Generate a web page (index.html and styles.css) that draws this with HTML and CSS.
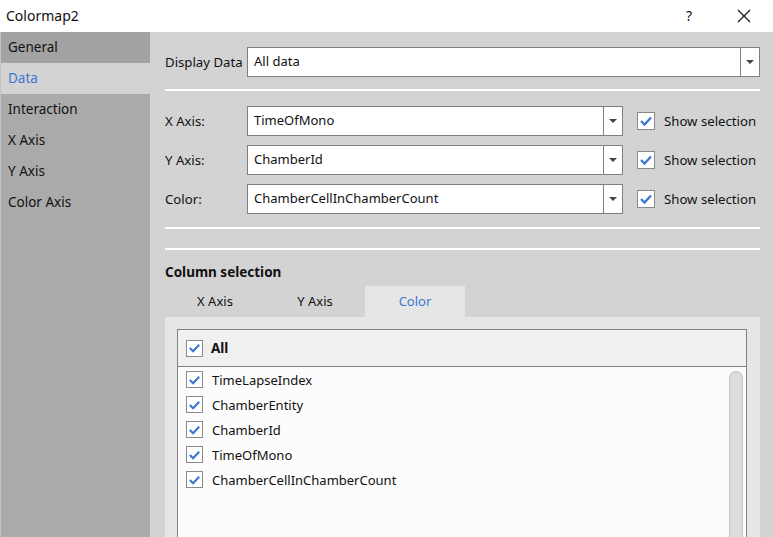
FILE: index.html
```html
<!DOCTYPE html>
<html>
<head>
<meta charset="utf-8">
<link rel="stylesheet" href="styles.css">
</head>
<body>
<div class="window">
  <div class="titlebar">
    <span class="title">Colormap2</span>
    <span class="help">?</span>
    <span class="close">
      <svg width="14" height="14" viewBox="0 0 14 14"><path d="M1 1 L13 13 M13 1 L1 13" stroke="#222" stroke-width="1.4" fill="none"/></svg>
    </span>
  </div>
  <div class="main">
    <nav class="sidebar">
      <div class="nav-item nav-first">General</div>
      <div class="nav-item nav-active">Data</div>
      <div class="nav-item">Interaction</div>
      <div class="nav-item">X Axis</div>
      <div class="nav-item">Y Axis</div>
      <div class="nav-item">Color Axis</div>
    </nav>
    <section class="content">
      <div class="row row-display">
        <label class="row-label">Display Data</label>
        <div class="combo combo-wide">
          <span class="combo-text">All data</span>
          <span class="combo-btn"><span class="arrow"></span></span>
        </div>
      </div>
      <div class="sep sep-first"></div>
      <div class="axis-rows">
        <div class="row">
          <label class="row-label">X Axis:</label>
          <div class="combo combo-axis">
            <span class="combo-text">TimeOfMono</span>
            <span class="combo-btn"><span class="arrow"></span></span>
          </div>
          <span class="check check-show"><svg viewBox="0 0 16 16" width="16" height="16"><path d="M3 8 L6.5 11.5 L13 4.5" stroke="#3b78d1" stroke-width="2.3" fill="none"/></svg></span>
          <span class="show-label">Show selection</span>
        </div>
        <div class="row">
          <label class="row-label">Y Axis:</label>
          <div class="combo combo-axis">
            <span class="combo-text">ChamberId</span>
            <span class="combo-btn"><span class="arrow"></span></span>
          </div>
          <span class="check check-show"><svg viewBox="0 0 16 16" width="16" height="16"><path d="M3 8 L6.5 11.5 L13 4.5" stroke="#3b78d1" stroke-width="2.3" fill="none"/></svg></span>
          <span class="show-label">Show selection</span>
        </div>
        <div class="row">
          <label class="row-label">Color:</label>
          <div class="combo combo-axis">
            <span class="combo-text">ChamberCellInChamberCount</span>
            <span class="combo-btn"><span class="arrow"></span></span>
          </div>
          <span class="check check-show"><svg viewBox="0 0 16 16" width="16" height="16"><path d="M3 8 L6.5 11.5 L13 4.5" stroke="#3b78d1" stroke-width="2.3" fill="none"/></svg></span>
          <span class="show-label">Show selection</span>
        </div>
      </div>
      <div class="sep sep-second"></div>
      <div class="sep sep-third"></div>
      <h2 class="section-title">Column selection</h2>
      <div class="tabs">
        <div class="tab">X Axis</div>
        <div class="tab">Y Axis</div>
        <div class="tab tab-active">Color</div>
      </div>
      <div class="tab-panel">
        <div class="listbox">
          <div class="list-header">
            <span class="check"><svg viewBox="0 0 16 16" width="16" height="16"><path d="M3 8 L6.5 11.5 L13 4.5" stroke="#3b78d1" stroke-width="2.3" fill="none"/></svg></span>
            <span class="all-label">All</span>
          </div>
          <div class="list-body">
            <ul class="items">
              <li class="item"><span class="check"><svg viewBox="0 0 16 16" width="16" height="16"><path d="M3 8 L6.5 11.5 L13 4.5" stroke="#3b78d1" stroke-width="2.3" fill="none"/></svg></span><span class="item-text">TimeLapseIndex</span></li>
              <li class="item"><span class="check"><svg viewBox="0 0 16 16" width="16" height="16"><path d="M3 8 L6.5 11.5 L13 4.5" stroke="#3b78d1" stroke-width="2.3" fill="none"/></svg></span><span class="item-text">ChamberEntity</span></li>
              <li class="item"><span class="check"><svg viewBox="0 0 16 16" width="16" height="16"><path d="M3 8 L6.5 11.5 L13 4.5" stroke="#3b78d1" stroke-width="2.3" fill="none"/></svg></span><span class="item-text">ChamberId</span></li>
              <li class="item"><span class="check"><svg viewBox="0 0 16 16" width="16" height="16"><path d="M3 8 L6.5 11.5 L13 4.5" stroke="#3b78d1" stroke-width="2.3" fill="none"/></svg></span><span class="item-text">TimeOfMono</span></li>
              <li class="item"><span class="check"><svg viewBox="0 0 16 16" width="16" height="16"><path d="M3 8 L6.5 11.5 L13 4.5" stroke="#3b78d1" stroke-width="2.3" fill="none"/></svg></span><span class="item-text">ChamberCellInChamberCount</span></li>
            </ul>
            <div class="scrollbar"></div>
          </div>
        </div>
      </div>
    </section>
  </div>
</div>
</body>
</html>
```

FILE: styles.css
```css
* { box-sizing: border-box; }
html, body {
  margin: 0;
  padding: 0;
  width: 773px;
  height: 537px;
  overflow: hidden;
  font-family: "Noto Sans", "Open Sans", "DejaVu Sans", sans-serif;
  font-size: 13px;
  color: #111;
}
.window {
  width: 773px;
  height: 537px;
  display: flex;
  flex-direction: column;
  background: #d3d3d3;
}
.titlebar {
  height: 32px;
  flex: none;
  background: #ffffff;
  display: flex;
  align-items: center;
  padding-left: 6px;
}
.title { font-size: 14px; flex: 1; padding-bottom: 2px; }
.help { font-size: 14px; width: 20px; margin-right: 38px; text-align: center; padding-bottom: 2px; }
.close { width: 14px; height: 14px; margin-right: 22px; display: flex; }
.main { flex: 1; display: flex; min-height: 0; }
.sidebar {
  width: 150px;
  flex: none;
  background: #aaaaaa;
  border-left: 1px solid #c4c4c4;
}
.nav-item {
  height: 31px;
  line-height: 30px;
  padding-left: 7px;
  font-size: 13.5px;
  color: #111;
}
.nav-first { background: #a2a2a2; }
.nav-active { background: #d3d3d3; color: #3a78d0; }
.content {
  flex: 1;
  padding: 15px 13px 0 15px;
  display: flex;
  flex-direction: column;
  min-width: 0;
}
.row {
  display: flex;
  align-items: center;
  height: 30px;
}
.row-label { width: 82px; flex: none; font-size: 13.2px; }
.combo {
  height: 30px;
  display: flex;
  border: 1px solid #7f7f7f;
  background: #fff;
}
.combo-wide { flex: 1; }
.combo-axis { width: 376px; flex: none; }
.combo-text { flex: 1; padding-left: 6px; line-height: 27px; }
.combo-btn {
  width: 19px;
  border-left: 1px solid #7f7f7f;
  display: flex;
  align-items: center;
  justify-content: center;
}
.arrow {
  width: 0;
  height: 0;
  border-left: 4px solid transparent;
  border-right: 4px solid transparent;
  border-top: 4px solid #444;
}
.sep { height: 2px; background: #ffffff; flex: none; }
.sep-first { margin-top: 12px; }
.axis-rows {
  margin-top: 15px;
  display: flex;
  flex-direction: column;
  gap: 9px;
}
.check {
  width: 17px;
  height: 17px;
  border: 1px solid #8a8a8a;
  background: #fff;
  display: inline-flex;
  align-items: center;
  justify-content: center;
  flex: none;
}
.check-show { margin-left: 14px; margin-right: 9px; width: 18px; height: 18px; }
.show-label { white-space: nowrap; font-size: 13.2px; }
.sep-second { margin-top: 13px; }
.sep-third { margin-top: 19px; }
.section-title {
  margin: 12px 0 4px 0;
  font-size: 13.5px;
  font-weight: bold;
  line-height: 20px;
}
.tabs { display: flex; height: 31px; flex: none; }
.tab {
  width: 100px;
  text-align: center;
  line-height: 30px;
}
.tab-active { background: #e6e6e6; color: #3a78d0; }
.tab-panel {
  flex: 1;
  background: #e6e6e6;
  padding: 12px 13px 0 12px;
  display: flex;
  flex-direction: column;
}
.listbox {
  flex: 1;
  border: 1px solid #828282;
  border-bottom: none;
  display: flex;
  flex-direction: column;
  background: #fcfcfc;
}
.list-header {
  height: 37px;
  flex: none;
  background: #f0f0f0;
  border-bottom: 1px solid #828282;
  display: flex;
  align-items: center;
  padding-left: 8px;
}
.all-label { font-weight: bold; margin-left: 8px; font-size: 13.5px; }
.list-body { flex: 1; display: flex; }
.items {
  list-style: none;
  margin: 0;
  padding: 0 0 0 8px;
  flex: 1;
}
.item {
  height: 25px;
  display: flex;
  align-items: center;
}
.item-text { margin-left: 9px; }
.scrollbar {
  width: 14px;
  margin: 4px 3px 0 0;
  background: #dcdcdc;
  border: 1px solid #c2c2c2;
  border-bottom: none;
  border-radius: 7px 7px 0 0;
}
```
